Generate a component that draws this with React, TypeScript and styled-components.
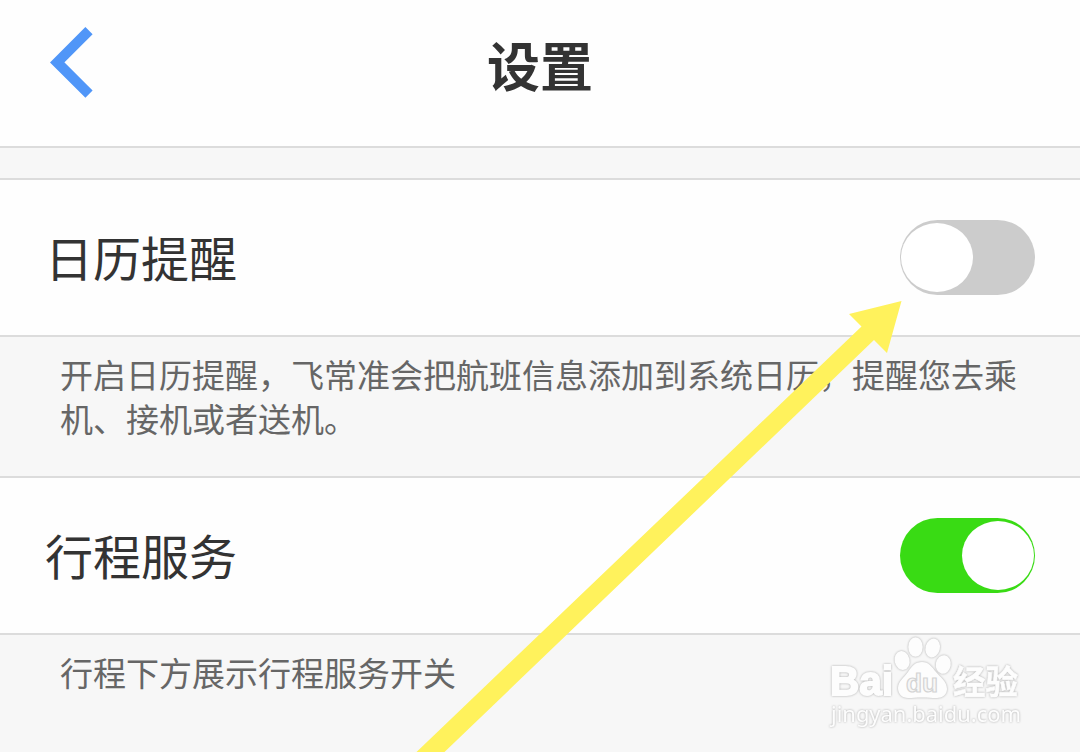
import React, { useState } from "react";
import styled, { createGlobalStyle } from "styled-components";

const Settings = () => {
  const [calendar, setCalendar] = useState(false);
  const [service, setService] = useState(true);

  return (
    <Page>
      <GlobalStyle />
      <Header>
        <BackButton aria-label="返回">
          <svg width="44" height="72" viewBox="0 0 44 72">
            <path
              d="M39 3.6 L7.2 35.4 L39 67.2"
              fill="none"
              stroke="#5096f8"
              strokeWidth="10.2"
            />
          </svg>
        </BackButton>
        <Title>设置</Title>
      </Header>
      <Gap />
      <Row>
        <Label>日历提醒</Label>
        <Switch
          $on={calendar}
          role="switch"
          aria-checked={calendar}
          onClick={() => setCalendar(!calendar)}
        >
          <Knob />
        </Switch>
      </Row>
      <Note $height={139}>
        开启日历提醒，飞常准会把航班信息添加到系统日历，提醒您去乘机、接机或者送机。
      </Note>
      <Row>
        <Label>行程服务</Label>
        <Switch
          $on={service}
          role="switch"
          aria-checked={service}
          onClick={() => setService(!service)}
        >
          <Knob />
        </Switch>
      </Row>
      <Note $height={117}>行程下方展示行程服务开关</Note>
      <Watermark />
      <Arrow viewBox="0 0 1080 752">
        <polygon
          points="901.5,301 849,314 861.5,326.5 416.5,752 444.5,752 874,340 887,353"
          fill="#fff25c"
        />
      </Arrow>
    </Page>
  );
};

const Watermark = () => (
  <WatermarkSvg viewBox="0 0 220 120">
    <Glow fill="#fdfdfd">
      <ellipse cx="82" cy="40.5" rx="7.5" ry="9.5" transform="rotate(-12 82 40)" />
      <ellipse cx="95.5" cy="27" rx="7.2" ry="9.8" />
      <ellipse cx="112.7" cy="28" rx="7.2" ry="9.6" transform="rotate(14 112.7 28)" />
      <ellipse cx="123.3" cy="44.5" rx="7.5" ry="9.3" transform="rotate(10 123.3 44.5)" />
      <path d="M102 42 C109 42 112 47 116 52 C120 57 127 61 127 69 C127 75 122 78 117 78 C111 78 108 77.5 102 77.5 C96 77.5 93 78 88 78 C82 78 78 74 78 68 C78 61 84 58 88 52 C92 46 95 42 102 42 Z" />
      <g stroke="#fdfdfd">
        <BrandText x="10" y="75" fontSize="41" textLength="63" lengthAdjust="spacingAndGlyphs" strokeWidth="1.8">
          Bai
        </BrandText>
        <BrandText x="133" y="74" fontSize="33" textLength="65" lengthAdjust="spacingAndGlyphs" strokeWidth="0.6">
          经验
        </BrandText>
      </g>
      <UrlText x="11" y="102" fontSize="22" textLength="190" lengthAdjust="spacingAndGlyphs">
        jingyan.baidu.com
      </UrlText>
    </Glow>
    <DuText x="86" y="71.5" fontSize="26" textLength="32" lengthAdjust="spacingAndGlyphs">
      du
    </DuText>
  </WatermarkSvg>
);

const GlobalStyle = createGlobalStyle`
  * {
    box-sizing: border-box;
  }
  body {
    margin: 0;
    background: #f7f7f7;
    font-family: "Noto Sans CJK SC", sans-serif;
  }
`;
const Page = styled.div`
  position: relative;
  width: 1080px;
  height: 752px;
  overflow: hidden;
  display: flex;
  flex-direction: column;
  background: #f7f7f7;
`;
const Header = styled.header`
  display: grid;
  grid-template-columns: 1fr auto 1fr;
  flex: none;
  height: 148px;
  padding: 0 50px;
  background: #fefefe;
  border-bottom: 2px solid #dcdcdc;
`;
const BackButton = styled.button`
  justify-self: start;
  align-self: start;
  margin-top: 27px;
  padding: 0;
  border: none;
  background: none;
  line-height: 0;
`;
const Title = styled.h1`
  margin: 24px 0 0;
  color: #333;
  font-size: 53px;
  line-height: 80px;
  font-weight: 700;
`;
const Gap = styled.div`
  flex: none;
  height: 30px;
`;
const Row = styled.div`
  display: flex;
  justify-content: space-between;
  align-items: flex-start;
  flex: none;
  height: 159px;
  padding: 40px 45px 0;
  background: #fefefe;
  border-top: 2px solid #dcdcdc;
  border-bottom: 2px solid #dcdcdc;
`;
const Label = styled.span`
  color: #333;
  font-size: 48px;
  line-height: 72px;
`;
const Switch = styled.button<{ $on: boolean }>`
  display: flex;
  align-items: center;
  justify-content: ${({ $on }) => ($on ? "flex-end" : "flex-start")};
  width: 135px;
  height: 75px;
  padding: 0 1px;
  border: none;
  border-radius: 38px;
  background: ${({ $on }) => ($on ? "#39db14" : "#ccc")};
`;
const Knob = styled.span`
  width: 72px;
  height: 69px;
  border-radius: 50%;
  background: #fff;
`;
const Note = styled.p<{ $height: number }>`
  flex: none;
  height: ${({ $height }) => $height}px;
  margin: 0;
  padding: 15px 60px 0;
  color: #666;
  font-size: 33px;
  line-height: 44px;
`;
const Arrow = styled.svg`
  position: absolute;
  inset: 0;
  width: 1080px;
  height: 752px;
  pointer-events: none;
`;
const WatermarkSvg = styled.svg`
  position: absolute;
  left: 820px;
  top: 620px;
  width: 220px;
  height: 120px;
  pointer-events: none;
`;
const Glow = styled.g`
  filter: drop-shadow(0 0 0.8px #aaa);
`;
const BrandText = styled.text`
  font-family: "Liberation Sans", "Noto Sans CJK SC", sans-serif;
  font-weight: 700;
`;
const DuText = styled.text`
  font-family: "Liberation Sans", sans-serif;
  font-weight: 700;
  fill: #f7f7f7;
  stroke: #d4d4d4;
  stroke-width: 1.2px;
`;
const UrlText = styled.text`
  font-family: "Noto Sans", sans-serif;
`;

export default Settings;
